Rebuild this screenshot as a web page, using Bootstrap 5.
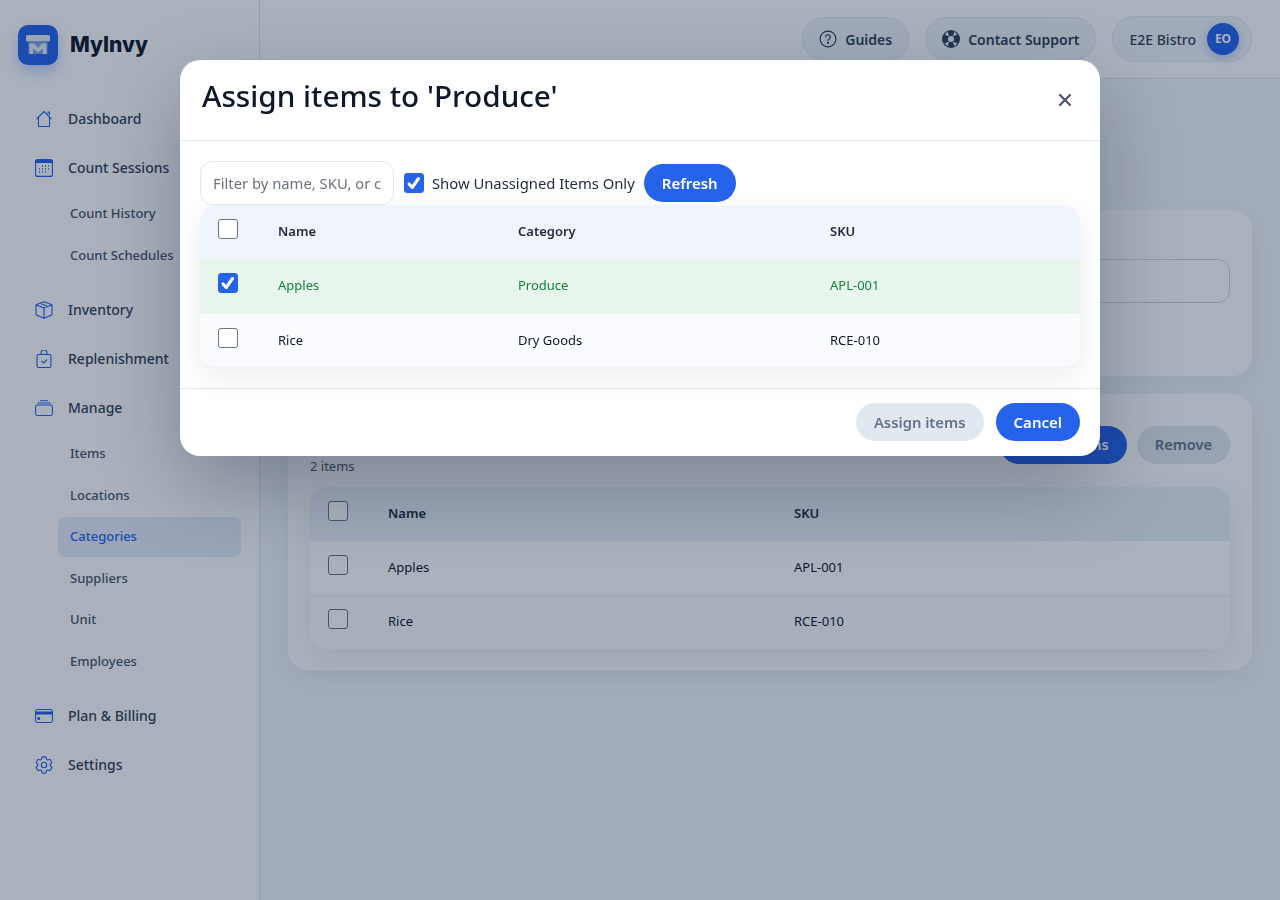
<!DOCTYPE html>
<html lang="en">
  <head>
    <meta charset="UTF-8" />
    <meta name="viewport" content="width=device-width, initial-scale=1.0" />
    <title>MyInvy - Categories</title>
    <link href="https://cdn.jsdelivr.net/npm/bootstrap@5.3.3/dist/css/bootstrap.min.css" rel="stylesheet" />
    <style>
      body {
        font-family: "Noto Sans", "Liberation Sans", sans-serif;
        background: #f3f6f9;
        color: #0f172a;
        height: 900px;
        overflow: hidden;
      }
      .app-shell { height: 900px; }
      .side-bar {
        width: 260px;
        flex: none;
        background: #fff;
        border-right: 1px solid #dbe3ee;
        padding: 24px 18px 0 18px;
      }
      .logo-box {
        width: 40px;
        height: 40px;
        border-radius: 10px;
        background: #2563eb;
        box-shadow: 0 6px 14px rgba(37, 99, 235, 0.3);
      }
      .logo-word {
        font-family: "Inter", "Noto Sans", sans-serif;
        font-size: 21px;
        font-weight: 800;
        color: #0f172a;
        line-height: 40px;
        padding-top: 1px;
      }
      .side-nav { margin-top: 33px; gap: 8px; }
      .nav-main {
        height: 41px;
        padding-left: 17px;
        gap: 15px;
        font-size: 14px;
        font-weight: 500;
        color: #334155;
        text-decoration: none;
      }
      .nav-main svg { width: 18px; height: 18px; flex: none; color: #2563eb; }
      .sub-group { margin: -2px 0 4px 40px; width: 183px; }
      .nav-sub {
        height: 40px;
        margin-bottom: 1.500px;
        padding-left: 12px;
        font-size: 13px;
        font-weight: 500;
        color: #475569;
        border-radius: 8px;
        text-decoration: none;
      }
      .nav-sub.is-active { background: #e6edfa; color: #2563eb; }
      .top-bar {
        height: 79px;
        flex: none;
        background: #fff;
        border-bottom: 1px solid #dbe3ee;
        padding-right: 28px;
        gap: 16px;
      }
      .top-pill {
        height: 44px;
        padding: 0 16px;
        gap: 8px;
        background: #f1f5f9;
        border: 1px solid #e2e8f0;
        border-radius: 22px;
        font-size: 14px;
        font-weight: 600;
        color: #334155;
      }
      .top-pill svg { width: 18px; height: 18px; flex: none; }
      .user-pill { height: 46px; padding: 0 12px 0 16px; gap: 11px; border-radius: 23px; font-weight: 500; }
      .avatar-dot {
        width: 32px;
        height: 32px;
        border-radius: 50%;
        background: #2563eb;
        color: #fff;
        font-size: 12px;
        font-weight: 700;
        box-shadow: 0 3px 8px rgba(37, 99, 235, 0.3);
      }
      .main-area { padding: 131px 28px 0 28px; gap: 18px; }
      .pane {
        background: #fff;
        border-radius: 20px;
        padding: 22px 22px 21px;
        box-shadow: 0 8px 24px rgba(15, 23, 42, 0.05);
      }
      .pane-top { height: 166px; padding-top: 49px; }
      .pane-input {
        height: 44px;
        border: 1px solid #cbd5e1;
        border-radius: 12px;
      }
      .pane-head { height: 60px; margin-bottom: 11px; }
      .pane-count { font-size: 13px; color: #475569; line-height: 20px; }
      .pane-btns { gap: 10px; margin-top: 10px; }
      .pane-btns .pill-btn { font-size: 14.6px; }
      .pill-btn {
        height: 38px;
        padding: 0 18px;
        border: 0;
        border-radius: 19px;
        font-size: 15px;
        font-weight: 600;
      }
      .pill-blue, .pill-blue:hover { background: #2563eb; color: #fff; }
      .pill-grey, .pill-grey:hover, .pill-grey:disabled { background: #e2e8f0; color: #64748b; opacity: 1; font-size: 14.8px; }
      .data-wrap {
        border-radius: 16px;
        overflow: hidden;
        box-shadow: 0 10px 30px rgba(15, 23, 42, 0.08);
      }
      .data-grid { table-layout: fixed; font-size: 13px; margin: 0; }
      .data-grid th, .data-grid td {
        height: 54px;
        padding: 0 18px;
        vertical-align: middle;
        border: 0;
        background: #fafbff;
        color: #0f172a;
        font-weight: 400;
        box-shadow: none;
      }
      .data-grid th { background: #f0f4fc; color: #1e293b; font-weight: 600; }
      .data-grid .row-picked td { background: #e8f5ec; color: #15803d; height: 55px; padding-bottom: 1px; }
      .data-grid .row-last td { height: 53px; }
      .col-tick { width: 60px; }
      .col-name-m { width: 240px; }
      .col-cat-m { width: 312px; }
      .col-name-b { width: 406px; }
      .data-grid .form-check-input {
        width: 20px;
        height: 20px;
        margin: 0 0 6px 0;
        display: block;
        border-color: #6b7280;
        border-radius: 3px;
      }
      .form-check-input:checked {
        background-color: #2563eb;
        border-color: #2563eb;
        background-image: url("data:image/svg+xml,%3csvg xmlns='http://www.w3.org/2000/svg' viewBox='0 0 20 20'%3e%3cpath fill='none' stroke='%23fff' stroke-linecap='round' stroke-linejoin='round' stroke-width='3.4' d='M4.500 11l3.500 4 7-10'/%3e%3c/svg%3e");
      }
      .pane-rows td { border-bottom: 1px solid #e8edf4 !important; background: #fff !important; }
      .pane-rows tr:last-child td { border-bottom: 0 !important; background: #fbfcfe !important; padding-bottom: 1px; }
      .pane-table th { background: #ecf1f8; }
      .modal-backdrop.show { background: #0c2040; opacity: 0.35; }
      .assign-dialog { max-width: 920px; width: 920px; margin: 60px 0 0 180px; }
      .assign-dialog .modal-content {
        border: 0;
        border-radius: 20px;
        box-shadow: 0 30px 80px rgba(15, 23, 42, 0.28);
      }
      .assign-dialog .modal-header {
        height: 81px;
        padding: 0 22px;
        border-bottom: 1px solid #e2e8f0;
        align-items: flex-start;
      }
      .assign-dialog .modal-title {
        font-size: 29.7px;
        font-weight: 500;
        line-height: 71px;
        color: #0f172a;
      }
      .close-x { border: 0; background: none; padding: 0; margin: 32px 5px 0 0; width: 16px; height: 16px; color: #475569; display: flex; }
      .assign-dialog .modal-body { padding: 20px 20px 21px; }
      .filter-row { height: 44px; gap: 10px; }
      .filter-input {
        width: 194px;
        height: 44px;
        border: 1px solid #e2e8f0;
        border-radius: 12px;
        padding: 0 12px;
        font-size: 14.8px;
      }
      .filter-input::placeholder { color: #6b7280; }
      .filter-check { gap: 8px; font-size: 14.8px; color: #1e293b; margin-right: -1px; }
      .filter-check .form-check-input { width: 20px; height: 20px; margin: 0; border-radius: 3px; }
      .assign-dialog .modal-footer {
        height: 68px;
        padding: 0 20px 1px;
        gap: 12px;
        border-top: 1px solid #e2e8f0;
      }
      .assign-dialog .modal-footer > * { margin: 0; }
    </style>
  </head>
  <body>
    <div class="app-shell d-flex">
      <aside class="side-bar">
        <div class="d-flex align-items-center gap-2">
          <div class="logo-box d-flex align-items-center justify-content-center">
            <svg width="28" height="26" viewBox="0 0 28 26" fill="none">
              <rect x="2" y="3" width="24" height="6.500" rx="1.500" fill="#e8edf6"/>
              <path d="M4.500 9h19v13h-19z" fill="#7ea1e6"/>
              <path d="M5.500 22V11.500h4.500L14 16l4-4.500h4.500V22H19v-5.500L14 20.500l-5-4V22z" fill="#e8edf6"/>
            </svg>
          </div>
          <span class="logo-word ms-1">MyInvy</span>
        </div>
        <nav class="side-nav d-flex flex-column">
          <a class="nav-main d-flex align-items-center" href="#">
            <svg viewBox="0 0 18 18" fill="none" stroke="currentColor" stroke-width="1.100" stroke-linejoin="round"><path d="M1.500 9 9 1.500 16.500 9M3.500 7.500V16.500h11V7.500M13 3.500V2h1.500v3"/></svg>
            Dashboard</a>
          <a class="nav-main d-flex align-items-center" href="#">
            <svg viewBox="0 0 18 18" fill="none" stroke="currentColor" stroke-width="1.100"><rect x="0.600" y="0.600" width="16.800" height="16.800" rx="2"/><path d="M0.600 1.500h16.800V3.500H0.600z" fill="currentColor"/><path d="M7 7h1M10 7h1M13 7h1M4 10h1M7 10h1M10 10h1M13 10h1M4 13h1M7 13h1M10 13h1" stroke-width="1.300"/></svg>
            Count Sessions</a>
          <div class="sub-group">
            <a class="nav-sub d-flex align-items-center" href="#">Count History</a>
            <a class="nav-sub d-flex align-items-center" href="#">Count Schedules</a>
          </div>
          <a class="nav-main d-flex align-items-center" href="#">
            <svg viewBox="0 0 18 18" fill="none" stroke="currentColor" stroke-width="1.100" stroke-linejoin="round"><path d="M9 .8 17 3.800v10L9 17.200 1 13.800v-10zM1 3.800l8 3.200 8-3.200M9 7v10.200M5 2.300l8 3.100"/></svg>
            Inventory</a>
          <a class="nav-main d-flex align-items-center" href="#">
            <svg viewBox="0 0 18 18" fill="none" stroke="currentColor" stroke-width="1.100" stroke-linejoin="round"><rect x="2" y="4.500" width="14" height="13" rx="1.800"/><path d="M6 4.500V3a3 3 0 0 1 6 0v1.500M6.500 11l2 2 3.500-3.500"/></svg>
            Replenishment</a>
          <a class="nav-main d-flex align-items-center" href="#">
            <svg viewBox="0 0 18 18" fill="none" stroke="currentColor" stroke-width="1.100"><rect x="0.600" y="6" width="16.800" height="10.500" rx="1.800"/><path d="M2.500 4h13M5 1.800h8"/></svg>
            Manage</a>
          <div class="sub-group">
            <a class="nav-sub d-flex align-items-center" href="#">Items</a>
            <a class="nav-sub d-flex align-items-center" href="#">Locations</a>
            <a class="nav-sub is-active d-flex align-items-center" href="#">Categories</a>
            <a class="nav-sub d-flex align-items-center" href="#">Suppliers</a>
            <a class="nav-sub d-flex align-items-center" href="#">Unit</a>
            <a class="nav-sub d-flex align-items-center" href="#">Employees</a>
          </div>
          <a class="nav-main d-flex align-items-center" href="#">
            <svg viewBox="0 0 18 18" fill="none" stroke="currentColor" stroke-width="1.100"><rect x="0.600" y="2.500" width="16.800" height="13" rx="1.800"/><path d="M0.600 5h16.800v2H0.600z" fill="currentColor"/><circle cx="3.800" cy="11.500" r="1" fill="currentColor"/></svg>
            Plan &amp; Billing</a>
          <a class="nav-main d-flex align-items-center" href="#">
            <svg viewBox="2 2 20 20" fill="none" stroke="currentColor" stroke-width="1.250" stroke-linejoin="round"><path d="M9.594 3.940c.09-.542.56-.94 1.110-.94h2.593c.55 0 1.020.398 1.110.94l.213 1.281c.063.374.313.686.645.870.074.040.147.083.22.127.325.196.72.257 1.075.124l1.217-.456a1.125 1.125 0 0 1 1.370.49l1.296 2.247a1.125 1.125 0 0 1-.26 1.431l-1.003.827c-.293.241-.438.613-.43.992a7.723 7.723 0 0 1 0 .255c-.008.378.137.75.43.991l1.004.827c.424.35.534.955.26 1.430l-1.298 2.247a1.125 1.125 0 0 1-1.369.491l-1.217-.456c-.355-.133-.75-.072-1.076.124a6.470 6.470 0 0 1-.22.128c-.331.183-.581.495-.644.869l-.213 1.281c-.09.543-.56.94-1.110.94h-2.594c-.55 0-1.019-.398-1.110-.94l-.213-1.281c-.062-.374-.312-.686-.644-.870a6.520 6.520 0 0 1-.22-.127c-.325-.196-.72-.257-1.076-.124l-1.217.456a1.125 1.125 0 0 1-1.369-.49l-1.297-2.247a1.125 1.125 0 0 1 .26-1.431l1.004-.827c.292-.24.437-.613.43-.991a6.932 6.932 0 0 1 0-.255c.007-.38-.138-.751-.43-.992l-1.004-.827a1.125 1.125 0 0 1-.26-1.430l1.297-2.247a1.125 1.125 0 0 1 1.370-.491l1.216.456c.356.133.751.072 1.076-.124.072-.044.146-.086.22-.128.332-.183.582-.495.644-.869l.214-1.280z"/><circle cx="12" cy="12" r="3"/></svg>
            Settings</a>
        </nav>
      </aside>

      <div class="flex-grow-1 d-flex flex-column">
        <header class="top-bar d-flex align-items-center justify-content-end">
          <div class="top-pill d-flex align-items-center">
            <svg viewBox="0 0 20 20" fill="none" stroke="currentColor" stroke-width="1.300"><circle cx="10" cy="10" r="8.800"/><path d="M7.500 7.800a2.500 2.500 0 1 1 3.800 2.100c-.9.500-1.300 1-1.300 1.900" stroke-linecap="round"/><circle cx="10" cy="14.300" r=".6" fill="currentColor"/></svg>
            Guides</div>
          <div class="top-pill d-flex align-items-center">
            <svg viewBox="0 0 20 20"><circle cx="10" cy="10" r="10" fill="currentColor"/><circle cx="10" cy="10" r="3.400" fill="#f1f5f9"/><path d="M6 1.800 8 6.900 3 5.200zM14 1.800 12 6.900 17 5.200zM6 18.200 8 13.100 3 14.800zM14 18.200 12 13.100 17 14.800z" fill="#f1f5f9"/></svg>
            Contact Support</div>
          <div class="top-pill user-pill d-flex align-items-center">
            E2E Bistro
            <span class="avatar-dot d-flex align-items-center justify-content-center">EO</span>
          </div>
        </header>
        <main class="main-area d-flex flex-column">
          <section class="pane pane-top">
            <div class="pane-input"></div>
          </section>
          <section class="pane">
            <div class="pane-head d-flex justify-content-between">
              <div class="pane-count align-self-end">2 items</div>
              <div class="pane-btns d-flex align-items-start">
                <button class="btn pill-btn pill-blue">Assign items</button>
                <button class="btn pill-btn pill-grey">Remove</button>
              </div>
            </div>
            <div class="data-wrap">
              <table class="table data-grid pane-table">
                <thead>
                  <tr>
                    <th class="col-tick"><input class="form-check-input" type="checkbox" /></th>
                    <th class="col-name-b">Name</th>
                    <th>SKU</th>
                  </tr>
                </thead>
                <tbody class="pane-rows">
                  <tr>
                    <td><input class="form-check-input" type="checkbox" /></td>
                    <td>Apples</td>
                    <td>APL-001</td>
                  </tr>
                  <tr>
                    <td><input class="form-check-input" type="checkbox" /></td>
                    <td>Rice</td>
                    <td>RCE-010</td>
                  </tr>
                </tbody>
              </table>
            </div>
          </section>
        </main>
      </div>
    </div>

    <div class="modal-backdrop show"></div>
    <div class="modal d-block" tabindex="-1">
      <div class="modal-dialog assign-dialog">
        <div class="modal-content">
          <div class="modal-header justify-content-between">
            <h1 class="modal-title">Assign items to 'Produce'</h1>
            <button class="close-x" type="button" aria-label="Close">
              <svg width="16" height="16" viewBox="0 0 16 16" fill="none" stroke="currentColor" stroke-width="2.200" stroke-linecap="round"><path d="M3 3l10 10M13 3 3 13"/></svg>
            </button>
          </div>
          <div class="modal-body">
            <div class="filter-row d-flex align-items-center">
              <input class="filter-input form-control" type="text" placeholder="Filter by name, SKU, or category" />
              <label class="filter-check d-flex align-items-center">
                <input class="form-check-input" type="checkbox" checked />
                Show Unassigned Items Only
              </label>
              <button class="btn pill-btn pill-blue">Refresh</button>
            </div>
            <div class="data-wrap">
              <table class="table data-grid">
                <thead>
                  <tr>
                    <th class="col-tick"><input class="form-check-input" type="checkbox" /></th>
                    <th class="col-name-m">Name</th>
                    <th class="col-cat-m">Category</th>
                    <th>SKU</th>
                  </tr>
                </thead>
                <tbody>
                  <tr class="row-picked">
                    <td><input class="form-check-input" type="checkbox" checked /></td>
                    <td>Apples</td>
                    <td>Produce</td>
                    <td>APL-001</td>
                  </tr>
                  <tr class="row-last">
                    <td><input class="form-check-input" type="checkbox" /></td>
                    <td>Rice</td>
                    <td>Dry Goods</td>
                    <td>RCE-010</td>
                  </tr>
                </tbody>
              </table>
            </div>
          </div>
          <div class="modal-footer">
            <button class="btn pill-btn pill-grey" disabled>Assign items</button>
            <button class="btn pill-btn pill-blue">Cancel</button>
          </div>
        </div>
      </div>
    </div>

    <script src="https://cdn.jsdelivr.net/npm/bootstrap@5.3.3/dist/js/bootstrap.bundle.min.js"></script>
  </body>
</html>
